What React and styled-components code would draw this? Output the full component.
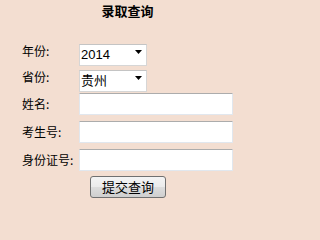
import React from "react";
import styled, { createGlobalStyle } from "styled-components";

const Global = createGlobalStyle`
  html, body { margin: 0; padding: 0; background: #F3DED1; }
  body { font-family: "Noto Sans CJK SC", "Liberation Sans", sans-serif; color: #000; }
`;

const Page = styled.div`
  width: 255px;
  height: 215px;
  background: #F3DED1;
  display: flex;
  flex-direction: column;
`;

const Title = styled.h1`
  margin: 0;
  padding-top: 3px;
  font-size: 13px;
  line-height: 16px;
  font-weight: bold;
  text-align: center;
  font-family: "Noto Sans CJK SC", sans-serif;
`;

const Form = styled.form`
  margin: 21px 0 0;
  padding-left: 22px;
  display: flex;
  flex-direction: column;
`;

const Row = styled.div`
  display: grid;
  grid-template-columns: 57px auto;
  align-items: center;
  height: 22px;
  margin-top: ${(p) => p.$gap || 0}px;
`;

const Label = styled.label`
  font-size: 12px;
  line-height: 22px;
  white-space: nowrap;
  font-family: "Noto Sans CJK SC", sans-serif;
`;

const SelectWrap = styled.div`
  position: relative;
  width: 68px;
  height: 22px;
`;

const Select = styled.select`
  appearance: none;
  -webkit-appearance: none;
  box-sizing: border-box;
  width: 100%;
  height: 100%;
  margin: 0;
  padding: 0 0 0 1px;
  background: #fff;
  border: 1px solid #d6d6d6;
  border-top-color: #c4c4c4;
  border-radius: 0;
  font-size: 13px;
  font-family: "Liberation Sans", "Noto Sans CJK SC", sans-serif;
  color: #000;
  outline: none;
`;

const Arrow = styled.svg`
  position: absolute;
  right: 5px;
  top: 10px;
  pointer-events: none;
`;

const Input = styled.input`
  box-sizing: border-box;
  width: 154px;
  height: 22px;
  margin: 0;
  padding: 0 2px;
  background: #fff;
  border: 1px solid #e1e7ee;
  border-top-color: #acacac;
  border-radius: 1px;
  outline: none;
  font-size: 13px;
`;

const ButtonRow = styled.div`
  display: flex;
  justify-content: center;
  margin-top: 5px;
  padding-right: 22px;
`;

const Button = styled.button`
  box-sizing: border-box;
  width: 76px;
  height: 22px;
  margin: 0 0 0 1px;
  padding: 0;
  border: 1px solid #707070;
  border-radius: 3px;
  background: linear-gradient(#f4f4f4 0%, #ebebeb 50%, #dddddd 51%, #cfcfcf 100%);
  font-size: 13px;
  line-height: 20px;
  font-family: "Noto Sans CJK SC", sans-serif;
  color: #000;
`;

const Dropdown = ({ value, options }) => (
  <SelectWrap>
    <Select defaultValue={value}>
      {options.map((o) => (
        <option key={o}>{o}</option>
      ))}
    </Select>
    <Arrow width="7" height="4" viewBox="0 0 7 4">
      <path d="M0 0H7L3.5 4Z" fill="#000" />
    </Arrow>
  </SelectWrap>
);

export default function App() {
  return (
    <Page>
      <Global />
      <Title>录取查询</Title>
      <Form onSubmit={(e) => e.preventDefault()}>
        <Row>
          <Label>年份:</Label>
          <Dropdown value="2014" options={["2014", "2013", "2012"]} />
        </Row>
        <Row $gap={4}>
          <Label>省份:</Label>
          <Dropdown value="贵州" options={["贵州", "云南", "四川"]} />
        </Row>
        <Row $gap={5}>
          <Label>姓名:</Label>
          <Input type="text" />
        </Row>
        <Row $gap={6}>
          <Label>考生号:</Label>
          <Input type="text" />
        </Row>
        <Row $gap={6}>
          <Label>身份证号:</Label>
          <Input type="text" />
        </Row>
        <ButtonRow>
          <Button type="submit">提交查询</Button>
        </ButtonRow>
      </Form>
    </Page>
  );
}
